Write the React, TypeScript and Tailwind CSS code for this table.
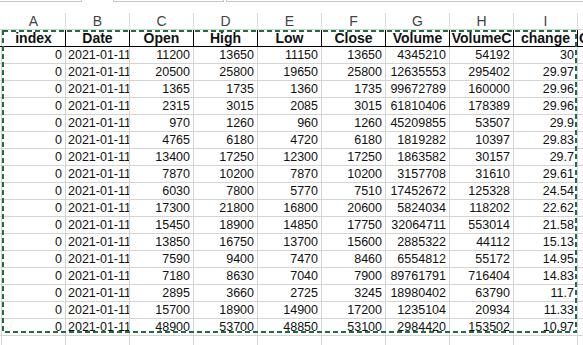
import React from "react";

const letters = ["A", "B", "C", "D", "E", "F", "G", "H", "I"];
const headers = ["index", "Date", "Open", "High", "Low", "Close", "Volume", "VolumeC", "change"];

const rows: (string | number)[][] = [
  [11200, 13650, 11150, 13650, 4345210, 54192, "30"],
  [20500, 25800, 19650, 25800, 12635553, 295402, "29.97"],
  [1365, 1735, 1360, 1735, 99672789, 160000, "29.96"],
  [2315, 3015, 2085, 3015, 61810406, 178389, "29.96"],
  [970, 1260, 960, 1260, 45209855, 53507, "29.9"],
  [4765, 6180, 4720, 6180, 1819282, 10397, "29.83"],
  [13400, 17250, 12300, 17250, 1863582, 30157, "29.7"],
  [7870, 10200, 7870, 10200, 3157708, 31610, "29.61"],
  [6030, 7800, 5770, 7510, 17452672, 125328, "24.54"],
  [17300, 21800, 16800, 20600, 5824034, 118202, "22.62"],
  [15450, 18900, 14850, 17750, 32064711, 553014, "21.58"],
  [13850, 16750, 13700, 15600, 2885322, 44112, "15.13"],
  [7590, 9400, 7470, 8460, 6554812, 55172, "14.95"],
  [7180, 8630, 7040, 7900, 89761791, 716404, "14.83"],
  [2895, 3660, 2725, 3245, 18980402, 63790, "11.7"],
  [15700, 18900, 14900, 17200, 1235104, 20934, "11.33"],
  [48900, 53700, 48850, 53100, 2984420, 153502, "10.97"],
];

function Spacer() {
  return <div className="w-[2px] shrink-0 border-r border-[#d4d4d4]" />;
}

export default function App() {
  return (
    <div className="relative w-[583px] h-[345px] overflow-hidden bg-white font-['Liberation_Sans',Arial,sans-serif] text-[#111]">
      {/* formula bar remnant */}
      <div className="flex h-[13px]">
        <div className="w-[82px] h-[2px] border-b border-r border-[#c6c6c6]" />
        <div className="w-[31px]" />
        <div className="w-[111px] h-[2px] border-b border-x border-[#c6c6c6]" />
        <div className="w-[2px]" />
        <div className="flex-1 h-[2px] border-b border-l border-[#c6c6c6]" />
      </div>

      {/* column letters */}
      <div className="flex h-[17px] border-b border-[#d4d4d4]">
        <div className="w-[2px] shrink-0" />
        {letters.map((l) => (
          <div
            key={l}
            className="w-[64px] shrink-0 border-r border-[#dadada] flex items-center justify-center text-[14px] leading-none text-[#444]"
          >
            {l}
          </div>
        ))}
        <div className="flex-1" />
      </div>

      {/* header row */}
      <div className="flex h-[17px] border-b border-black">
        <Spacer />
        {headers.map((h) => (
          <div
            key={h}
            className="w-[64px] shrink-0 border-r border-black flex items-center justify-center overflow-hidden whitespace-nowrap text-[14px] font-bold leading-none"
          >
            {h}
          </div>
        ))}
        <div className="flex-1 overflow-hidden whitespace-nowrap flex items-center pl-[1px] text-[14px] font-bold leading-none">
          Code
        </div>
      </div>

      {/* data rows */}
      {rows.map((r, i) => (
        <div key={i} className="flex h-[17px] border-b border-[#d4d4d4] text-[12.5px] leading-none">
          <Spacer />
          <div className="w-[64px] shrink-0 border-r border-[#d4d4d4] flex items-center justify-end pr-[3px]">0</div>
          <div className="w-[64px] shrink-0 border-r border-[#d4d4d4] flex items-center pl-[2px] overflow-hidden whitespace-nowrap">
            2021-01-11 00:00:00
          </div>
          {r.map((v, j) => (
            <div
              key={j}
              className="w-[64px] shrink-0 border-r border-[#d4d4d4] flex items-center justify-end pr-[3px] whitespace-nowrap"
            >
              {v}
            </div>
          ))}
          <div className="flex-1" />
        </div>
      ))}

      {/* trailing empty row */}
      <div className="flex h-[17px] border-b border-[#d4d4d4]">
        <Spacer />
        {letters.map((l) => (
          <div key={l} className="w-[64px] shrink-0 border-r border-[#d4d4d4]" />
        ))}
        <div className="flex-1" />
      </div>

      {/* copy selection marching ants */}
      <svg className="absolute left-0 top-0 pointer-events-none" width="583" height="345">
        <rect
          x="3"
          y="31"
          width="573"
          height="301"
          fill="none"
          stroke="#1f6e43"
          strokeWidth="2"
          strokeDasharray="5 3"
        />
      </svg>
    </div>
  );
}
